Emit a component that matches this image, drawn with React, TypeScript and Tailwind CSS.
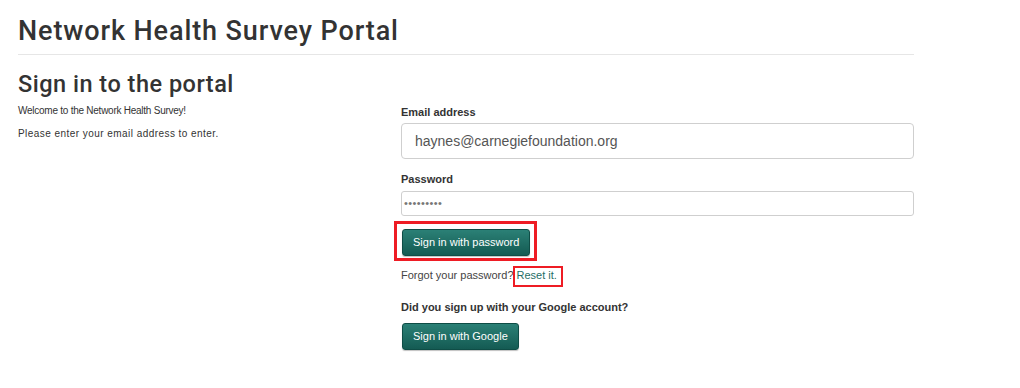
import React from "react";

export default function App() {
  const btn =
    "h-[27px] rounded-[3px] border border-[#0f4d46] bg-gradient-to-b from-[#2b8076] to-[#145b53] px-[10px] text-[11px] leading-[25px] text-white shadow-[0_1px_1px_rgba(0,0,0,0.25)]";
  return (
    <div
      className="min-h-[388px] w-[1020px] bg-white text-[#333]"
      style={{ fontFamily: '"Liberation Sans", Arial, sans-serif' }}
    >
      <div className="w-[914px] pl-[18px]">
        <h1 className="border-b border-[#e6e6e6] pb-[8px] pt-[16px] font-['Roboto',sans-serif] text-[27px] font-medium leading-[30px] tracking-[0.9px] text-[#333]">
          Network Health Survey Portal
        </h1>
        <h2 className="mt-[15px] font-['Roboto',sans-serif] text-[23.5px] font-medium leading-[28px] tracking-[0.5px] text-[#333]">
          Sign in to the portal
        </h2>
        <div className="mt-[6px] grid grid-cols-[383px_1fr]">
          <div className="text-[10px] leading-[14px] text-[#333]">
            <p className="tracking-[-0.25px]">Welcome to the Network Health Survey!</p>
            <p className="mt-[9px] tracking-[0.45px]">Please enter your email address to enter.</p>
          </div>
          <div>
            <label className="mt-[1px] block text-[11px] font-bold leading-[14px]">
              Email address
            </label>
            <div className="mt-[4px] flex h-[36px] items-center rounded-[4px] border border-[#cfcfcf] pl-[13px] text-[14px] text-[#555]">
              haynes@carnegiefoundation.org
            </div>
            <label className="mt-[13px] block text-[11px] font-bold leading-[14px]">
              Password
            </label>
            <div className="mt-[5px] flex h-[25px] items-center rounded-[3px] border border-[#cfcfcf] pl-[2px] text-[11px] tracking-[0.4px] text-[#777]">
              •••••••••
            </div>
            <div className="relative mt-[13px] inline-block">
              <button className={`${btn} ml-[1px]`}>Sign in with password</button>
              <span className="pointer-events-none absolute -left-[7px] -top-[8px] h-[40px] w-[143px] border-[3px] border-[#ee1c24]" />
            </div>
            <p className="mt-[12px] text-[11px] leading-[14px] text-[#444]">
              Forgot your password?{" "}
              <span className="relative text-[#1f6e66]">
                Reset it.
                <span className="pointer-events-none absolute -left-[4px] -top-[3px] h-[21px] w-[50px] border-[2px] border-[#ee1c24]" />
              </span>
            </p>
            <p className="mt-[18px] text-[11px] font-bold leading-[14px] text-[#333]">
              Did you sign up with your Google account?
            </p>
            <div className="mt-[9px]">
              <button className={`${btn} ml-[1px]`}>Sign in with Google</button>
            </div>
          </div>
        </div>
      </div>
    </div>
  );
}
